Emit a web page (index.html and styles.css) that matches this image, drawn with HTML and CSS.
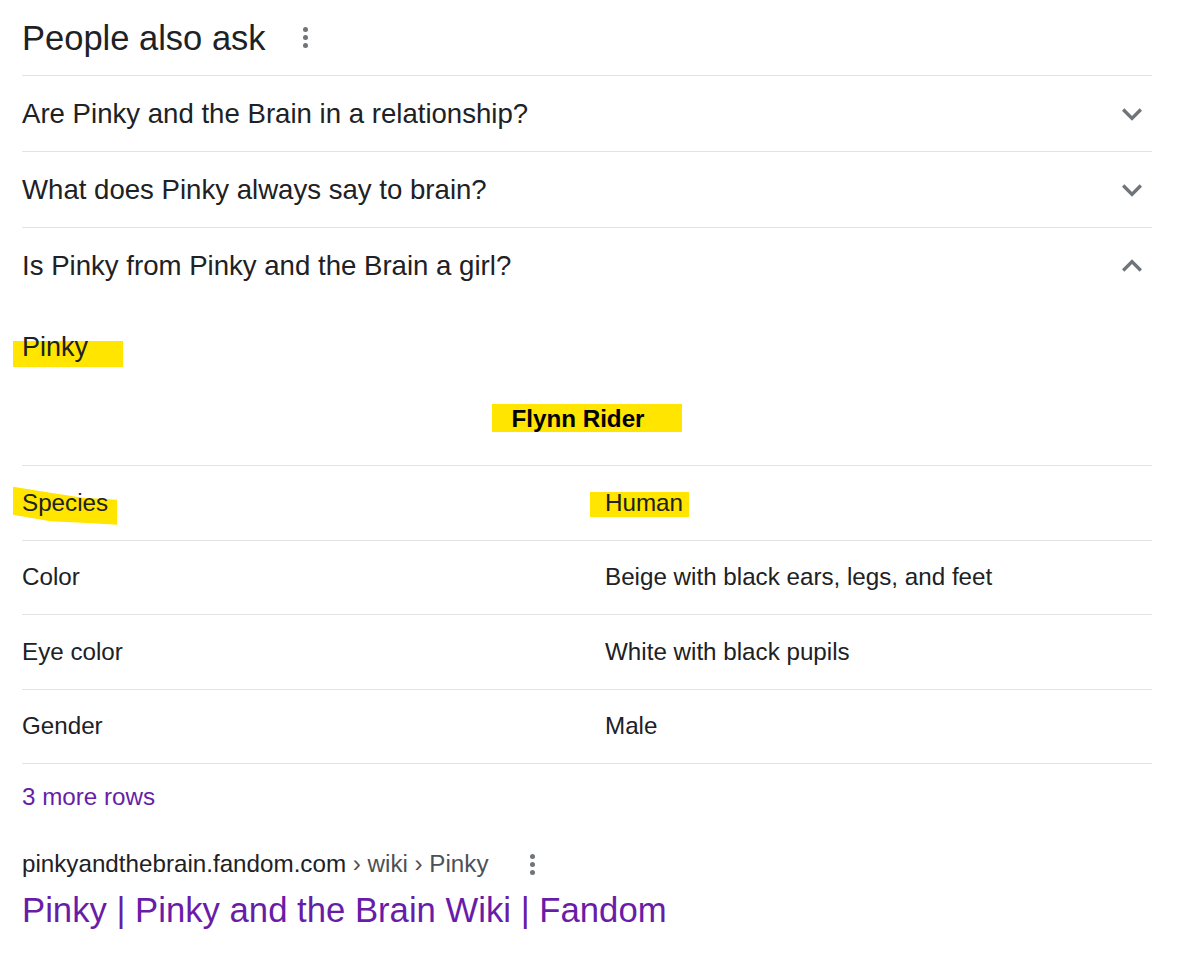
FILE: index.html
```html
<!DOCTYPE html>
<html lang="en">
<head>
<meta charset="utf-8">
<title>People also ask</title>
<link rel="stylesheet" href="styles.css">
</head>
<body>
<div class="page">
  <div class="paa-head">
    <h2 class="paa-title">People also ask</h2>
    <span class="dots" aria-hidden="true"><i></i><i></i><i></i></span>
  </div>

  <div class="q-row">
    <span class="q-text">Are Pinky and the Brain in a relationship?</span>
    <svg class="chev" viewBox="0 0 24 24" width="40" height="40"><path d="M7.41 8.59 12 13.17l4.59-4.58L18 10l-6 6-6-6z"/></svg>
  </div>
  <div class="q-row">
    <span class="q-text">What does Pinky always say to brain?</span>
    <svg class="chev" viewBox="0 0 24 24" width="40" height="40"><path d="M7.41 8.59 12 13.17l4.59-4.58L18 10l-6 6-6-6z"/></svg>
  </div>
  <div class="q-row q-open">
    <span class="q-text">Is Pinky from Pinky and the Brain a girl?</span>
    <svg class="chev" viewBox="0 0 24 24" width="40" height="40"><path d="M7.41 15.41 12 10.83l4.59 4.58L18 14l-6-6-6 6z"/></svg>
  </div>

  <div class="answer">
    <div class="ans-head"><span class="hl hl-pinky">Pinky</span></div>
    <div class="caption"><span class="hl hl-flynn">Flynn Rider</span></div>
    <div class="info-table">
      <div class="info-row"><div class="cell"><span class="hl hl-species">Species</span></div><div class="cell"><span class="hl hl-human">Human</span></div></div>
      <div class="info-row"><div class="cell">Color</div><div class="cell">Beige with black ears, legs, and feet</div></div>
      <div class="info-row"><div class="cell">Eye color</div><div class="cell">White with black pupils</div></div>
      <div class="info-row"><div class="cell">Gender</div><div class="cell">Male</div></div>
    </div>
    <div class="more-rows">3 more rows</div>
    <div class="source">
      <span class="src-url">pinkyandthebrain.fandom.com<span class="crumb"> › wiki › Pinky</span></span>
      <span class="dots dots-small" aria-hidden="true"><i></i><i></i><i></i></span>
    </div>
    <div class="src-title">Pinky | Pinky and the Brain Wiki | Fandom</div>
  </div>
</div>
</body>
</html>
```

FILE: styles.css
```css
html {
  background: #ffffff;
}
html, body {
  margin: 0;
  padding: 0;
}
body {
  font-family: "Liberation Sans", Arial, sans-serif;
  color: #202124;
}
.page {
  width: 1130px;
  margin-left: 22px;
}
.paa-head {
  height: 75px;
  display: flex;
  align-items: center;
  border-bottom: 1px solid #e3e3e3;
}
.paa-title {
  margin: 0;
  font-size: 34.5px;
  font-weight: normal;
  line-height: 40px;
}
.dots {
  display: flex;
  flex-direction: column;
  gap: 3px;
  margin-left: 37px;
}
.dots i {
  display: block;
  width: 5px;
  height: 5px;
  border-radius: 50%;
  background: #70757a;
}
.q-row {
  height: 75px;
  display: flex;
  align-items: center;
  justify-content: space-between;
  border-bottom: 1px solid #e3e3e3;
}
.q-row.q-open {
  border-bottom: none;
}
.q-text {
  font-size: 27.6px;
  line-height: 32px;
}
.chev {
  width: 40px;
  height: 40px;
  fill: #70757a;
  margin-right: 0;
}
.answer {
  padding-top: 29px;
}
.hl {
  position: relative;
}
.hl::before {
  content: "";
  position: absolute;
  background: #ffe500;
  z-index: -1;
}
.ans-head {
  font-size: 27px;
  line-height: 30px;
}
.hl-pinky::before {
  left: -9px;
  top: 9px;
  width: 110px;
  height: 26px;
}
.caption {
  margin-top: 43px;
  text-align: center;
  font-size: 24.2px;
  font-weight: bold;
  line-height: 28px;
  padding-right: 18px;
  color: #000;
}
.hl-flynn::before {
  left: -19px;
  top: -1px;
  width: 190px;
  height: 28px;
}
.info-table {
  margin-top: 32px;
  border-top: 1px solid #e3e3e3;
}
.info-row {
  display: grid;
  grid-template-columns: 583px 1fr;
  height: 73.5px;
  align-items: center;
  border-bottom: 1px solid #e3e3e3;
  font-size: 24.2px;
  line-height: 28px;
}
.hl-species::before {
  left: -9px;
  top: -2px;
  width: 104px;
  height: 38px;
  clip-path: polygon(0 0, 36% 16%, 67% 29%, 100% 34%, 100% 100%, 67% 95%, 36% 91%, 0 74%);
}
.hl-human::before {
  left: -15px;
  top: 3px;
  width: 99px;
  height: 25px;
}
.more-rows {
  color: #681da8;
  font-size: 24.2px;
  line-height: 28px;
  margin-top: 19px;
}
.source {
  display: flex;
  align-items: center;
  margin-top: 39px;
  font-size: 24.2px;
  line-height: 28px;
}
.crumb {
  color: #4d5156;
}
.dots-small {
  margin-left: 41px;
}
.src-title {
  color: #681da8;
  font-size: 34.7px;
  line-height: 40px;
  margin-top: 12px;
}
```
